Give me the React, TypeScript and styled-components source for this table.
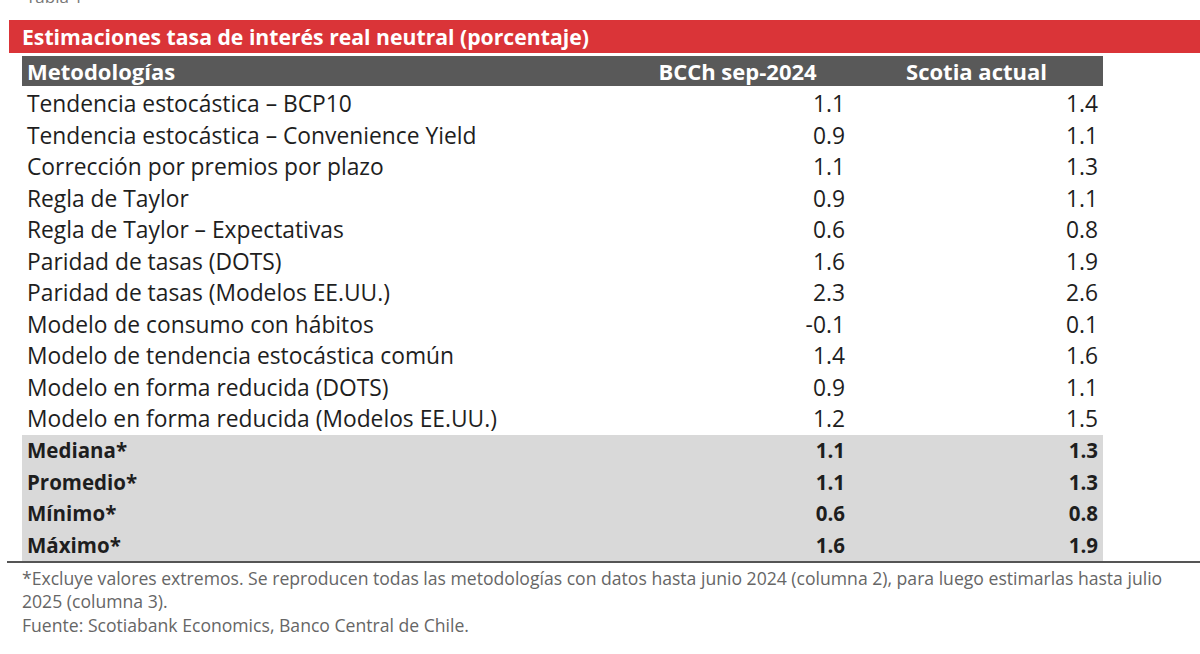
import React from 'react';
import styled, { createGlobalStyle } from 'styled-components';

const GlobalStyle = createGlobalStyle`
  html, body {
    margin: 0;
    padding: 0;
    background: #ffffff;
  }
  body {
    font-family: "Open Sans", "Liberation Sans", sans-serif;
    overflow: hidden;
  }
`;

const Page = styled.div`
  width: 1200px;
  height: 654px;
  overflow: hidden;
`;

const Caption = styled.div`
  margin: -13px 0 0 26px;
  height: 33px;
  font-size: 17px;
  line-height: 20px;
  color: #777;
`;

const TitleBar = styled.div`
  margin-left: 9px;
  height: 33px;
  background: #da3438;
  color: #fff;
  font-weight: 700;
  font-size: 21.2px;
  line-height: 33px;
  padding-left: 13px;
  box-sizing: border-box;
`;

const Table = styled.div`
  margin: 3px 0 0 22px;
  width: 1081px;
`;

const Grid = styled.div<{ $head?: boolean; $summary?: boolean }>`
  display: grid;
  grid-template-columns: 603px 225px 253px;
  height: ${({ $head }) => ($head ? '30px' : '31.5px')};
  align-items: center;
  background: ${({ $head, $summary }) => ($head ? '#595959' : $summary ? '#d9d9d9' : 'transparent')};
  color: ${({ $head }) => ($head ? '#fff' : '#1e1e1e')};
  font-weight: ${({ $head, $summary }) => ($head || $summary ? 700 : 400)};
  font-size: ${({ $head, $summary }) => ($head ? '22px' : $summary ? '20.5px' : '22.8px')};
`;

const Body = styled.div`
  margin-top: 2px;
`;

const Label = styled.div`
  padding-left: 5px;
  white-space: nowrap;
`;

const Num = styled.div<{ $head?: boolean }>`
  text-align: ${({ $head }) => ($head ? 'center' : 'right')};
  padding-right: ${({ $head }) => ($head ? '0' : '5px')};
`;

const Rule = styled.div`
  margin-left: 7px;
  height: 2px;
  background: #555;
`;

const Notes = styled.div`
  padding: 4px 0 0 22px;
  color: #666;
  font-size: 17.6px;
  line-height: 23.5px;
  width: 1165px;
`;

const rows: [string, string, string][] = [
  ['Tendencia estocástica – BCP10', '1.1', '1.4'],
  ['Tendencia estocástica – Convenience Yield', '0.9', '1.1'],
  ['Corrección por premios por plazo', '1.1', '1.3'],
  ['Regla de Taylor', '0.9', '1.1'],
  ['Regla de Taylor – Expectativas', '0.6', '0.8'],
  ['Paridad de tasas (DOTS)', '1.6', '1.9'],
  ['Paridad de tasas (Modelos EE.UU.)', '2.3', '2.6'],
  ['Modelo de consumo con hábitos', '-0.1', '0.1'],
  ['Modelo de tendencia estocástica común', '1.4', '1.6'],
  ['Modelo en forma reducida (DOTS)', '0.9', '1.1'],
  ['Modelo en forma reducida (Modelos EE.UU.)', '1.2', '1.5'],
];

const summary: [string, string, string][] = [
  ['Mediana*', '1.1', '1.3'],
  ['Promedio*', '1.1', '1.3'],
  ['Mínimo*', '0.6', '0.8'],
  ['Máximo*', '1.6', '1.9'],
];

export default function App() {
  return (
    <Page>
      <GlobalStyle />
      <Caption>Tabla 1</Caption>
      <TitleBar>Estimaciones tasa de interés real neutral (porcentaje)</TitleBar>
      <Table>
        <Grid $head>
          <Label>Metodologías</Label>
          <Num $head>BCCh sep-2024</Num>
          <Num $head>Scotia actual</Num>
        </Grid>
        <Body>
          {rows.map(([l, a, b]) => (
            <Grid key={l}>
              <Label>{l}</Label>
              <Num>{a}</Num>
              <Num>{b}</Num>
            </Grid>
          ))}
          {summary.map(([l, a, b]) => (
            <Grid key={l} $summary>
              <Label>{l}</Label>
              <Num>{a}</Num>
              <Num>{b}</Num>
            </Grid>
          ))}
        </Body>
      </Table>
      <Rule />
      <Notes>
        *Excluye valores extremos. Se reproducen todas las metodologías con datos hasta junio 2024 (columna 2), para luego estimarlas hasta julio 2025 (columna 3).
        <br />
        Fuente: Scotiabank Economics, Banco Central de Chile.
      </Notes>
    </Page>
  );
}
